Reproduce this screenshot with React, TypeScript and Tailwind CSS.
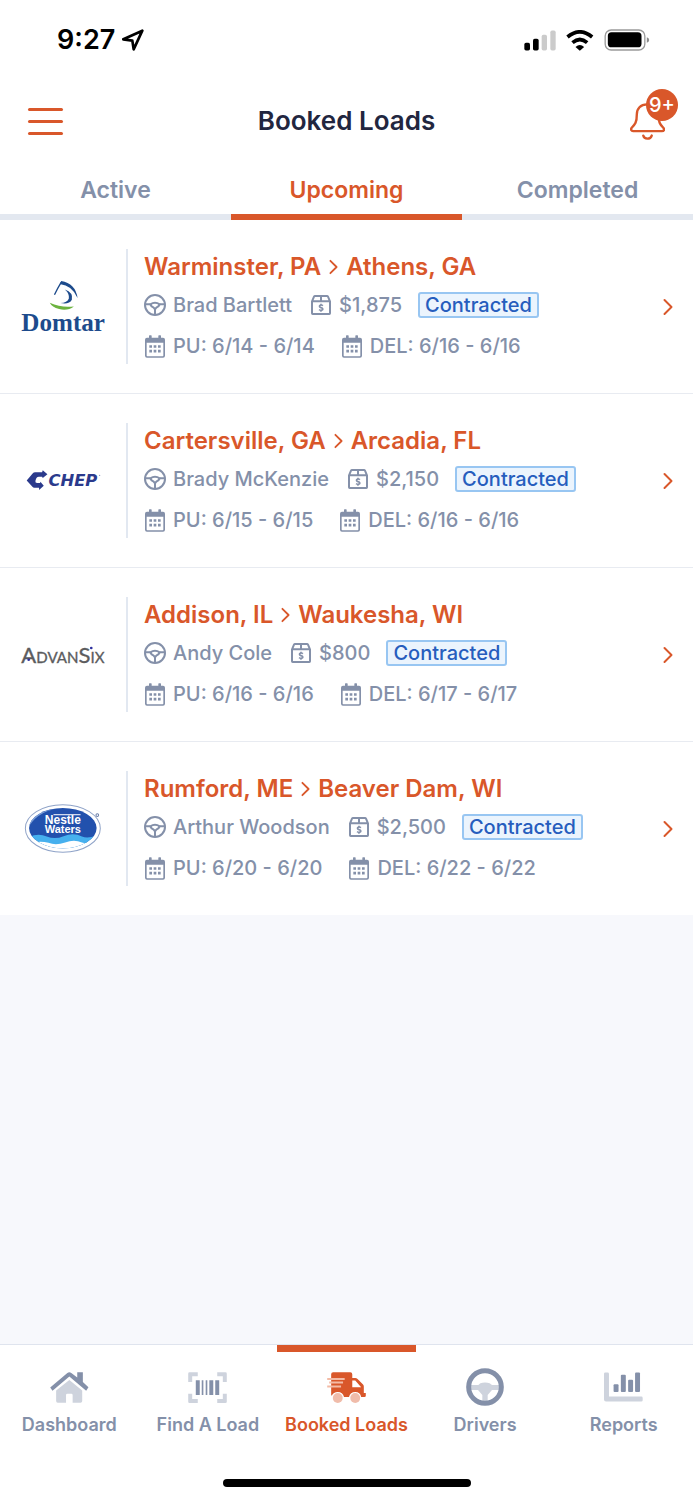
import { useState } from "react";
import type { ReactNode } from "react";

interface Load {
  origin: string;
  destination: string;
  driver: string;
  price: string;
  status: string;
  pickup: string;
  delivery: string;
  logo: ReactNode;
}

const DomtarLogo = () => (
  <svg viewBox="60 115 260 182" className="w-[87px]" role="img" aria-label="Domtar">
    <path d="M163 171 Q172 152 183 134" fill="none" stroke="#1d4b8c" strokeWidth="4" />
    <path d="M179 139 L183 130 Q226 137 232 181 Q216 143 179 139Z" fill="#1d4b8c" />
    <path d="M194 155 Q220 164 215 186 Q207 201 181 196 Q201 195 206 182 Q208 167 194 155Z" fill="#1d4b8c" />
    <path d="M149 195 Q184 211 221 206 Q203 220 177 214 Q155 208 149 195Z" fill="#6cb33f" />
    <text x="64" y="278" fontSize="75" fontWeight="700" fill="#1d4b8c" fontFamily="Liberation Serif, serif">
      Domtar
    </text>
  </svg>
);

const ChepLogo = () => (
  <svg viewBox="60 142 260 80" className="w-[87px]" role="img" aria-label="CHEP">
    <path
      d="M80 182 L99 160 Q101 158 105 158 L126 158 L128 152 L142 164 L128 175 L126 171 L116 171 Q110 171 108 177 L106 184 Q105 190 111 190 L120 190 L121 186 L131 198 L117 211 L117 204 L103 204 Q99 204 97 201Z"
      fill="#2b3a8c"
    />
    <text x="145" y="198" fontSize="49" fontWeight="700" fontStyle="italic" fill="#2b3a8c" fontFamily="DejaVu Sans, sans-serif">
      CHEP
    </text>
    <circle cx="298" cy="167" r="2" fill="#8b93bd" />
  </svg>
);

const AdvanSixLogo = () => (
  <svg viewBox="60 116 260 98" className="w-[87px]" role="img" aria-label="AdvanSix">
    <text x="64" y="190" fontSize="66" fill="#5c5c5e" stroke="#5c5c5e" strokeWidth="1" fontFamily="Lato, sans-serif">
      A<tspan fontSize="45">DVAN</tspan>S<tspan fontSize="45">IX</tspan>
    </text>
    <circle cx="86" cy="181" r="4" fill="#2c2f9e" />
    <circle cx="273" cy="146" r="4" fill="#2c2f9e" />
  </svg>
);

const NestleLogo = () => (
  <svg viewBox="60 98 260 152" className="w-[87px]" role="img" aria-label="Nestle Waters">
    <defs>
      <clipPath id="nestle-oval">
        <ellipse cx="188" cy="173" rx="101" ry="60" />
      </clipPath>
    </defs>
    <ellipse cx="188" cy="174" rx="112" ry="71" fill="#fff" stroke="#8fa3c8" strokeWidth="3" />
    <g clipPath="url(#nestle-oval)">
      <rect x="80" y="105" width="220" height="140" fill="#2251ad" />
      <path d="M80 165 Q93 123 188 113 Q110 118 80 180Z" fill="#7d9fd6" />
      <path d="M80 204 Q110 185 140 198 Q165 208 190 197 Q220 185 245 198 Q265 207 300 190 V250 H80Z" fill="#46b0ee" />
      <path d="M80 222 Q115 208 145 217 Q167 226 195 216 Q222 206 245 216 Q265 223 300 214 V250 H80Z" fill="#fff" />
    </g>
    <path d="M160 133 H241" stroke="#fff" strokeWidth="3" />
    <g fill="#fff" fontWeight="700" fontFamily="Liberation Sans, sans-serif" textAnchor="middle">
      <text x="188" y="160" fontSize="36">
        Nestle
      </text>
      <text x="188" y="187" fontSize="33">
        Waters
      </text>
    </g>
    <circle cx="291" cy="134" r="4" fill="none" stroke="#6c7fa8" strokeWidth="3" />
  </svg>
);

const loads: Load[] = [
  {
    origin: "Warminster, PA",
    destination: "Athens, GA",
    driver: "Brad Bartlett",
    price: "$1,875",
    status: "Contracted",
    pickup: "6/14 - 6/14",
    delivery: "6/16 - 6/16",
    logo: <DomtarLogo />,
  },
  {
    origin: "Cartersville, GA",
    destination: "Arcadia, FL",
    driver: "Brady McKenzie",
    price: "$2,150",
    status: "Contracted",
    pickup: "6/15 - 6/15",
    delivery: "6/16 - 6/16",
    logo: <ChepLogo />,
  },
  {
    origin: "Addison, IL",
    destination: "Waukesha, WI",
    driver: "Andy Cole",
    price: "$800",
    status: "Contracted",
    pickup: "6/16 - 6/16",
    delivery: "6/17 - 6/17",
    logo: <AdvanSixLogo />,
  },
  {
    origin: "Rumford, ME",
    destination: "Beaver Dam, WI",
    driver: "Arthur Woodson",
    price: "$2,500",
    status: "Contracted",
    pickup: "6/20 - 6/20",
    delivery: "6/22 - 6/22",
    logo: <NestleLogo />,
  },
];

const WheelIcon = () => (
  <svg viewBox="0 0 66 66" className="size-[22px] shrink-0" fill="none" stroke="currentColor" strokeWidth="6" strokeLinejoin="round">
    <circle cx="33" cy="33" r="30" />
    <path d="M4 31 H19 M47 31 H62 M33 46 V62" />
    <path d="M19 31 Q33 21 47 31 Q45 37 37 41 L33 46 L29 41 Q21 37 19 31Z" />
  </svg>
);

const BoxIcon = () => (
  <svg viewBox="-3 0 66 60" className="h-5 w-[22px] shrink-0" fill="none" stroke="currentColor" strokeWidth="6">
    <path d="M3 19 V55 Q3 57 5 57 H55 Q57 57 57 55 V19 L51 5 Q50 3 48 3 H12 Q10 3 9 5Z M3 19 H57 M30 3 V19" />
    <path d="M36 32 Q30 28 26 32 Q24 36 30 38 Q37 40 35 44 Q30 48 24 44 M30 26 V31 M30 45 V50" strokeWidth="5" />
  </svg>
);

const CalendarIcon = () => (
  <svg viewBox="-3 0 66 68" className="h-[23px] w-[22px] shrink-0">
    <path
      fillRule="evenodd"
      fill="currentColor"
      d="M12 2 q0-2 2-2 h4 q2 0 2 2 v6 h20 v-6 q0-2 2-2 h4 q2 0 2 2 v6 h6 q6 0 6 6 v48 q0 6-6 6 h-48 q-6 0-6-6 v-48 q0-6 6-6 h6Z M5 23 v38 q0 2 2 2 h46 q2 0 2-2 v-38Z"
    />
    <path d="M13 34 h8 m5 0 h8 m5 0 h8 M13 48 h8 m5 0 h8 m5 0 h8" stroke="currentColor" strokeWidth="8" />
  </svg>
);

const Chevron = ({ className }: { className: string }) => (
  <svg viewBox="0 0 10 18" className={className} fill="none" stroke="currentColor" strokeLinecap="round" strokeLinejoin="round">
    <path d="M1.5 2 L8.5 9 L1.5 16" />
  </svg>
);

const StatusBar = () => (
  <div className="flex h-20 items-center justify-between pr-[43px] pl-[57px] text-black">
    <div className="flex items-center gap-[7px]">
      <span className="text-[27px] leading-8 font-semibold">9:27</span>
      <svg viewBox="366 86 66 66" className="size-[22px]" fill="none" stroke="currentColor" strokeWidth="8" strokeLinejoin="round">
        <path d="M427 91 L370 117 L397 121 L401 147Z" />
      </svg>
    </div>
    <div className="flex items-center gap-[10px]">
      <svg viewBox="134 87 96 62" className="h-[21px] w-8">
        <rect x="135" y="125" width="17" height="23" rx="5" />
        <rect x="161" y="113" width="17" height="35" rx="5" />
        <rect x="187" y="101" width="16" height="47" rx="5" fill="#cbcbcb" />
        <rect x="213" y="88" width="16" height="60" rx="5" fill="#cbcbcb" />
      </svg>
      <svg viewBox="260 86 83 63" className="h-[21px] w-7" fill="none" stroke="currentColor" strokeWidth="11">
        <path d="M264 107 Q301 76 338 107" />
        <path d="M279 124 Q301 105 323 124" />
        <path d="M288 137 Q301 125 314 137 L301 148Z" fill="currentColor" stroke="none" />
      </svg>
      <svg viewBox="371 85 137 66" className="h-[22px] w-[46px]">
        <rect x="374" y="88" width="119" height="60" rx="18" fill="none" stroke="#9b9b9b" strokeWidth="4" />
        <rect x="382" y="95" width="101" height="45" rx="11" />
        <path d="M499 110 Q506 112 506 118 Q506 124 499 126Z" fill="#8b8b8b" />
      </svg>
    </div>
  </div>
);

const Header = () => (
  <header className="grid h-[82px] grid-cols-[1fr_auto_1fr] items-center px-7">
    <button type="button" aria-label="Open menu" className="flex w-[35px] flex-col gap-[9px]">
      <span className="h-[3px] w-full rounded-full bg-[#d9572a]" />
      <span className="h-[3px] w-full rounded-full bg-[#d9572a]" />
      <span className="h-[3px] w-full rounded-full bg-[#d9572a]" />
    </button>
    <h1 className="text-[26px] leading-8 font-semibold text-[#22263f]">Booked Loads</h1>
    <button type="button" aria-label="Notifications" className="relative justify-self-end text-[#d9572a]">
      <svg viewBox="451 313 103 109" className="h-[37px] w-[35px]" fill="none" stroke="currentColor" strokeWidth="7" strokeLinecap="round" strokeLinejoin="round">
        <path d="M501 317 C482 317 471 330 471 347 C471 370 466 376 456 386 C452 391 455 396 460 396 H545 C551 396 554 391 549 386 C539 376 535 370 535 347 C535 330 520 317 501 317Z" />
        <path d="M490 409 Q492 418 502 418 Q512 418 515 409" />
      </svg>
      <span className="absolute -top-[14px] left-4 flex size-8 items-center justify-center rounded-full bg-[#d9572a] text-xl font-medium text-white">
        9+
      </span>
    </button>
  </header>
);

const LoadRow = ({ load }: { load: Load }) => (
  <li className="border-b border-[#e8ebf1] bg-white last:border-b-0">
    <a href="#load" className="flex items-center py-[29px] pr-5">
      <div className="flex w-[126px] shrink-0 justify-center">{load.logo}</div>
      <div className="flex min-w-0 flex-1 flex-col border-l-2 border-[#e2e8f1] pl-4 text-xl font-medium text-[#8490a9]">
        <h2 className="flex h-9 items-center gap-2 text-2xl font-semibold text-[#d9572a]">
          {load.origin}
          <Chevron className="h-4 w-[9px] stroke-2" />
          {load.destination}
        </h2>
        <div className="flex h-10 items-center">
          <WheelIcon />
          <span className="ml-[7px]">{load.driver}</span>
          <span className="ml-[18px] flex items-center gap-[7px]">
            <BoxIcon />
            {load.price}
          </span>
          <span className="ml-4 rounded-[3px] border-2 border-[#98c6f2] bg-[#ebf4fd] px-[5px] leading-[22px] text-[#265dbd]">
            {load.status}
          </span>
        </div>
        <div className="flex h-[39px] items-end gap-[26px] pb-1">
          <span className="flex items-center gap-[7px]">
            <CalendarIcon />
            PU: {load.pickup}
          </span>
          <span className="flex items-center gap-[7px]">
            <CalendarIcon />
            DEL: {load.delivery}
          </span>
        </div>
      </div>
      <Chevron className="h-[18px] w-[10px] stroke-2 text-[#d9572a]" />
    </a>
  </li>
);

const navItems = [
  {
    label: "Dashboard",
    icon: (
      <svg viewBox="150 125 117 94" className="h-[31px] w-[39px]" fill="currentColor">
        <path d="M168 181 L208 149 L247 181 V213 Q247 218 242 218 H218 V195 Q218 191 214 191 H202 Q198 191 198 195 V218 H173 Q168 218 168 213Z" opacity=".4" />
        <path d="M232 126 H249 V155 L266 171 L259 182 L208 139 L157 182 L150 172 L202 128 Q208 124 214 128 L232 142Z" />
      </svg>
    ),
  },
  {
    label: "Find A Load",
    icon: (
      <svg viewBox="565 125 117 94" className="h-[31px] w-[39px]" fill="currentColor">
        <path
          d="M565 155 V130 Q565 126 569 126 H594 V138 H577 V155Z M653 126 H678 Q682 126 682 130 V155 H670 V138 H653Z M565 191 H577 V207 H594 V219 H569 Q565 219 565 215Z M670 191 H682 V215 Q682 219 678 219 H653 V207 H670Z"
          opacity=".4"
        />
        <path d="M588 150h12v45h-12z M606 150h5v45h-5z M618 150h5v45h-5z M629 150h12v45h-12z M647 150h12v45h-12z" />
      </svg>
    ),
  },
  {
    label: "Booked Loads",
    icon: (
      <svg viewBox="261 125 117 94" className="h-[31px] w-[39px]" fill="currentColor">
        <path
          fillRule="evenodd"
          d="M273 132 Q273 126 279 126 H331 Q337 126 337 132 V143 H346 Q350 143 353 146 L369 162 Q372 165 372 169 V189 H378 V197 Q378 201 374 201 H364 Q361 186 346 186 Q331 186 327 201 H312 Q308 186 293 186 Q280 186 275 197 L273 195Z M337 151 V171 H364 L346 151Z"
        />
        <path d="M261 146 H314 M267 157 H309 M261 169 H303" stroke="#f3bba6" strokeWidth="6" />
        <circle cx="293" cy="204" r="15" opacity=".4" />
        <circle cx="346" cy="204" r="15" opacity=".4" />
      </svg>
    ),
  },
  {
    label: "Drivers",
    icon: (
      <svg viewBox="107 114 114 114" className="size-[38px]" fill="currentColor">
        <path d="M121 165 H144 L150 160 Q164 155 178 160 L185 165 H208 V180 H185 L172 195 V216 H156 V195 L143 180 H121Z" opacity=".4" />
        <circle cx="164" cy="171" r="49" fill="none" stroke="currentColor" strokeWidth="15" />
      </svg>
    ),
  },
  {
    label: "Reports",
    icon: (
      <svg viewBox="521 127 118 90" className="h-[30px] w-[39px]" fill="currentColor">
        <path d="M521 132 Q521 128 525 128 H532 Q536 128 536 132 V201 H634 Q638 201 638 205 V212 Q638 216 634 216 H527 Q521 216 521 210Z" opacity=".4" />
        <rect x="550" y="164" width="15" height="23" rx="3" />
        <rect x="572" y="135" width="15" height="52" rx="3" />
        <rect x="594" y="150" width="15" height="37" rx="3" />
        <rect x="615" y="128" width="15" height="59" rx="3" />
      </svg>
    ),
  },
];

const BottomNav = () => (
  <nav className="border-t border-[#dfe4ee] bg-white">
    <div className="grid grid-cols-5">
      {navItems.map((item) => {
        const active = item.label === "Booked Loads";
        return (
          <a
            key={item.label}
            href="#nav"
            className={`flex flex-col items-center border-t-[7px] pt-[15px] text-lg font-semibold whitespace-nowrap ${
              active ? "border-[#d9572a] text-[#d9572a]" : "border-transparent text-[#8490a9]"
            }`}
          >
            <span className="flex h-10 items-center">{item.icon}</span>
            <span className="mt-[6px] leading-6">{item.label}</span>
          </a>
        );
      })}
    </div>
    <div className="flex justify-center pt-[42px] pb-[13px]">
      <span className="h-2 w-[248px] rounded-full bg-black" />
    </div>
  </nav>
);

const tabs = ["Active", "Upcoming", "Completed"];

export default function App() {
  const [activeTab, setActiveTab] = useState("Upcoming");

  return (
    <div className="flex min-h-screen flex-col bg-[#f7f8fc] font-['Inter',sans-serif]">
      <div className="bg-white">
        <StatusBar />
        <Header />
        <div role="tablist" className="grid grid-cols-3">
          {tabs.map((tab) => (
            <button
              key={tab}
              type="button"
              role="tab"
              aria-selected={tab === activeTab}
              onClick={() => setActiveTab(tab)}
              className={`h-[58px] border-b-6 pt-1 text-[23px] font-semibold ${
                tab === activeTab ? "border-[#d9572a] text-[#d9572a]" : "border-[#e3e8f0] text-[#8490a9]"
              }`}
            >
              {tab}
            </button>
          ))}
        </div>
      </div>
      <main className="flex-1">
        <ul>
          {loads.map((load) => (
            <LoadRow key={load.origin} load={load} />
          ))}
        </ul>
      </main>
      <BottomNav />
    </div>
  );
}
